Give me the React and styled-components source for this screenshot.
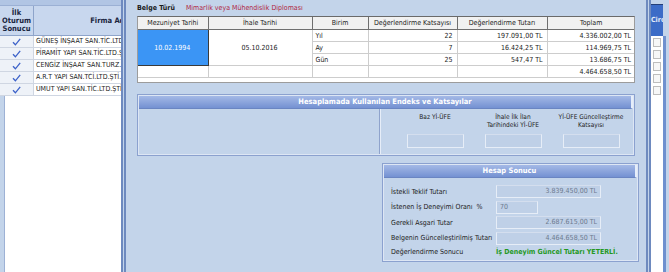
import React from 'react'
import styled, { createGlobalStyle } from 'styled-components'

const GlobalStyle = createGlobalStyle`
  html, body { margin:0; padding:0; }
  body {
    background:#c3d4ea;
    font-family:'DejaVu Sans Condensed','DejaVu Sans',sans-serif;
    font-size:7px;
    color:#1c1c1c;
    overflow:hidden;
  }
`

const firms = [
  'GÜNEŞ İNŞAAT SAN.TİC.LTD.ŞTİ.',
  'PİRAMİT YAPI SAN.TİC.LTD.ŞTİ.',
  'CENGİZ İNŞAAT SAN.TURZ.TİC.A.Ş.',
  'A.R.T YAPI SAN.TCİ.LTD.ŞTİ.',
  'UMUT YAPI SAN.TİC.LTD.ŞTİ.',
]

const units = [
  { unit: 'Yıl', rate: '22', amount: '197.091,00 TL', total: '4.336.002,00 TL' },
  { unit: 'Ay', rate: '7', amount: '16.424,25 TL', total: '114.969,75 TL' },
  { unit: 'Gün', rate: '25', amount: '547,47 TL', total: '13.686,75 TL' },
]

function Check() {
  return (
    <svg width="9" height="8" viewBox="0 0 9 8">
      <path d="M1 4.2 L3.4 6.8 L8.2 0.8" fill="none" stroke="#3d62c9" strokeWidth="1.3" />
    </svg>
  )
}

export default function App() {
  return (
    <>
      <GlobalStyle />
      <Screen>
        <LeftPane>
          <TopBand />
          <FirmGrid>
            <FirmHead>
              <HeadCell $w={34}>İlk<br />Oturum<br />Sonucu</HeadCell>
              <HeadCell $w={150}>Firma Adı</HeadCell>
            </FirmHead>
            {firms.map((f) => (
              <FirmRow key={f}>
                <CheckCell><Check /></CheckCell>
                <NameCell>{f}</NameCell>
              </FirmRow>
            ))}
          </FirmGrid>
          <EmptyArea />
        </LeftPane>

        <Dialog>
          <BelgeRow>
            <b>Belge Türü</b>
            <BelgeValue>Mimarlik veya Mühendislik Diploması</BelgeValue>
          </BelgeRow>

          <TableBox>
            <Table>
              <colgroup>
                <col style={{ width: 70 }} />
                <col style={{ width: 104 }} />
                <col style={{ width: 56 }} />
                <col style={{ width: 89 }} />
                <col style={{ width: 90 }} />
                <col style={{ width: 88 }} />
              </colgroup>
              <thead>
                <tr>
                  <Th>Mezuniyet Tarihi</Th>
                  <Th>İhale Tarihi</Th>
                  <Th>Birim</Th>
                  <Th>Değerlendirme Katsayısı</Th>
                  <Th>Değerlendirme Tutarı</Th>
                  <Th>Toplam</Th>
                </tr>
              </thead>
              <tbody>
                {units.map((u, i) => (
                  <tr key={u.unit}>
                    {i === 0 && <SelectedTd rowSpan={3}>10.02.1994</SelectedTd>}
                    {i === 0 && <Td rowSpan={3} $align="center">05.10.2016</Td>}
                    <Td $align="left">{u.unit}</Td>
                    <Td>{u.rate}</Td>
                    <Td>{u.amount}</Td>
                    <Td>{u.total}</Td>
                  </tr>
                ))}
                <tr>
                  <Td />
                  <Td />
                  <Td />
                  <Td />
                  <Td />
                  <Td>4.464.658,50 TL</Td>
                </tr>
              </tbody>
            </Table>
          </TableBox>

          <Panel $mt={11}>
            <PanelHead>Hesaplamada Kullanılan Endeks ve Katsayılar</PanelHead>
            <EndeksBody>
              <EndeksBlank />
              <EndeksCols>
                <EndeksCol>
                  <EndeksLabel>Baz Yİ-ÜFE</EndeksLabel>
                  <Field $w={57} $h={14} />
                </EndeksCol>
                <EndeksCol>
                  <EndeksLabel>İhale İlk İlan<br />Tarihindeki Yİ-ÜFE</EndeksLabel>
                  <Field $w={57} $h={14} />
                </EndeksCol>
                <EndeksCol>
                  <EndeksLabel>Yİ-ÜFE Güncelleştirme<br />Katsayısı</EndeksLabel>
                  <Field $w={57} $h={14} />
                </EndeksCol>
              </EndeksCols>
            </EndeksBody>
          </Panel>

          <Panel $mt={7} $ml={245} $w={253}>
            <PanelHead>Hesap Sonucu</PanelHead>
            <ResultBody>
              <ResultRow>
                <span>İstekli Teklif Tutarı</span>
                <Field $w={105} $h={13}>3.839.450,00 TL</Field>
              </ResultRow>
              <ResultRow>
                <span>İstenen İş Deneyimi Oranı &nbsp;%</span>
                <Field $w={42} $h={13} $left>70</Field>
              </ResultRow>
              <ResultRow>
                <span>Gerekli Asgari Tutar</span>
                <Field $w={105} $h={13}>2.687.615,00 TL</Field>
              </ResultRow>
              <ResultRow>
                <span>Belgenin Güncelleştirilmiş Tutarı</span>
                <Field $w={105} $h={13}>4.464.658,50 TL</Field>
              </ResultRow>
              <ResultRow $last>
                <span>Değerlendirme Sonucu</span>
                <Verdict>İş Deneyim Güncel Tutarı YETERLİ.</Verdict>
              </ResultRow>
            </ResultBody>
          </Panel>
        </Dialog>

        <RightPane>
          <RightTop />
          <CiroHead>Ciro</CiroHead>
          <CiroColumn>
            {firms.map((f) => (
              <CiroRow key={f}><Box /></CiroRow>
            ))}
          </CiroColumn>
        </RightPane>
      </Screen>
    </>
  )
}

const Screen = styled.div`
  display:flex;
  width:669px;
  height:272px;
  overflow:hidden;
`

/* left grid */
const LeftPane = styled.div`
  width:121px;
  flex:none;
  display:flex;
  flex-direction:column;
  overflow:hidden;
  background:#c3d4ea;
`
const TopBand = styled.div`
  height:5px;
  background:#b1c5e4;
`
const FirmGrid = styled.div`
  width:184px;
  display:flex;
  flex-direction:column;
  background:#fff;
`
const FirmHead = styled.div`
  display:flex;
  height:31px;
  background:#c8d7ee;
  border-top:1px solid #9bb0d4;
  border-bottom:1px solid #8ea4ca;
  box-sizing:border-box;
`
const HeadCell = styled.div`
  width:${(p) => p.$w}px;
  flex:none;
  display:flex;
  align-items:center;
  justify-content:center;
  text-align:center;
  font-weight:bold;
  font-size:7.5px;
  line-height:8px;
  color:#1a2540;
  border-right:1px solid #8ea4ca;
  box-sizing:border-box;
  white-space:nowrap;
`
const FirmRow = styled.div`
  display:flex;
  height:12px;
  border-bottom:1px solid #cfd6e2;
  box-sizing:border-box;
`
const CheckCell = styled.div`
  width:34px;
  display:flex;
  align-items:center;
  justify-content:center;
  background:#eef2f8;
  border-right:1px solid #cfd6e2;
  box-sizing:border-box;
`
const NameCell = styled.div`
  flex:1;
  padding-left:2px;
  line-height:11px;
  white-space:nowrap;
  color:#222;
`
const EmptyArea = styled.div`
  flex:1;
  margin-left:4px;
  background:#fff;
  border-left:1px solid #9db1d5;
`

/* dialog */
const Dialog = styled.div`
  width:530px;
  flex:none;
  box-sizing:border-box;
  border-left:5px double #6e8abf;
  border-right:5px double #6e8abf;
  padding:3px 11px 0 11px;
  background:#c3d4ea;
`
const BelgeRow = styled.div`
  display:flex;
  gap:11px;
  height:9px;
  align-items:center;
  b { color:#1a1a1a; }
`
const BelgeValue = styled.span`
  color:#b0253f;
`
const TableBox = styled.div`
  margin-top:4px;
  height:67px;
  box-sizing:border-box;
  background:#fff;
  border:1px solid #9c9c9c;
  border-top-color:#6a6a6a;
  overflow:hidden;
`
const Table = styled.table`
  width:100%;
  border-collapse:collapse;
  table-layout:fixed;
`
const Th = styled.th`
  height:12px;
  padding:0;
  font-weight:normal;
  background:#f1f1f1;
  border:1px solid #6f6f6f;
  border-top:none;
  color:#222;
  &:first-child { border-left:none; }
  &:last-child { border-right:none; }
`
const Td = styled.td`
  height:11px;
  padding:0 4px 0 3px;
  border:1px solid #cdcdcd;
  text-align:${(p) => p.$align || 'right'};
  color:#222;
  white-space:nowrap;
  &:first-child { border-left:none; }
  &:last-child { border-right:none; }
`
const SelectedTd = styled(Td)`
  background:#3b95f5;
  color:#fff;
  text-align:center;
  border:1px solid #3a3a3a;
  border-left:none;
`

const Panel = styled.section`
  margin-top:${(p) => p.$mt}px;
  margin-left:${(p) => p.$ml || 0}px;
  width:${(p) => (p.$w ? `${p.$w}px` : 'auto')};
  border:1px solid #8ba1cf;
  box-shadow:inset 0 0 0 1px #dde6f4;
  padding:1px;
  display:flex;
  flex-direction:column;
`
const PanelHead = styled.div`
  height:12px;
  line-height:12px;
  background:linear-gradient(#a4b9e6, #7491d2);
  border-right:2px solid #e6eefa;
  border-bottom:1px solid #6a85c2;
  color:#fff;
  font-weight:bold;
  font-size:7.5px;
  text-align:center;
`
const EndeksBody = styled.div`
  display:flex;
  height:45px;
`
const EndeksBlank = styled.div`
  width:240px;
  border-right:1px solid #8fa3cc;
  box-shadow:1px 0 0 #e6edf8;
`
const EndeksCols = styled.div`
  display:flex;
  padding-left:16px;
`
const EndeksCol = styled.div`
  width:78px;
  display:flex;
  flex-direction:column;
  align-items:center;
  padding-top:5px;
`
const EndeksLabel = styled.div`
  height:20px;
  font-size:6.5px;
  line-height:7.5px;
  text-align:center;
  white-space:nowrap;
  color:#222;
`
const Field = styled.div`
  width:${(p) => p.$w}px;
  height:${(p) => p.$h}px;
  box-sizing:border-box;
  background:#bfd0e7;
  border:1px solid #e6edf7;
  border-top-color:#d4deee;
  color:#6c7a8e;
  line-height:${(p) => p.$h - 2}px;
  text-align:${(p) => (p.$left ? 'left' : 'right')};
  padding:0 3px;
`
const ResultBody = styled.div`
  display:flex;
  flex-direction:column;
  padding:6px 0 2px 7px;
`
const ResultRow = styled.div`
  display:grid;
  grid-template-columns:105px auto;
  align-items:center;
  height:${(p) => (p.$last ? 12 : 15.5)}px;
  color:#222;
  white-space:nowrap;
`
const Verdict = styled.span`
  color:#23981f;
  font-weight:bold;
`

/* right grid */
const RightPane = styled.div`
  flex:1;
  display:flex;
  flex-direction:column;
  background:#c3d4ea;
  overflow:hidden;
`
const RightTop = styled.div`
  height:4px;
  width:12px;
  border-bottom:1px solid #243f78;
`
const CiroHead = styled.div`
  width:12px;
  height:31px;
  background:#3c6cc7;
  color:#e3ebf8;
  font-weight:bold;
  line-height:31px;
  white-space:nowrap;
  overflow:hidden;
`
const CiroColumn = styled.div`
  flex:1;
  width:12px;
  background:#fff;
  border-right:3px solid #6f90cf;
`
const CiroRow = styled.div`
  height:12px;
  display:flex;
  align-items:center;
  justify-content:center;
`
const Box = styled.div`
  width:6px;
  height:7px;
  border:1px solid #bdbdbd;
  background:#f7f7f7;
`
